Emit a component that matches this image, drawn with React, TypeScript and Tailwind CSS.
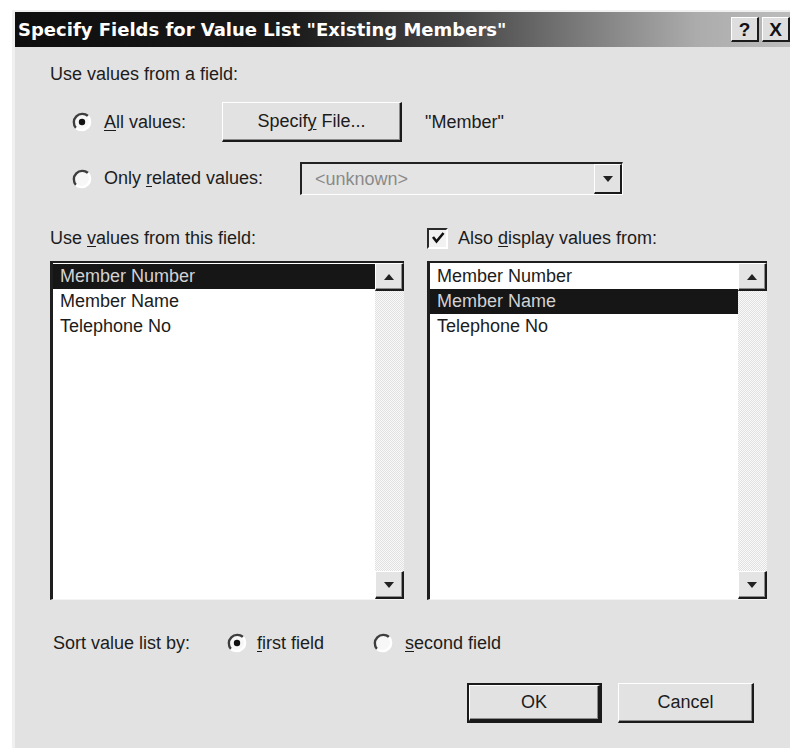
import React from "react";

const ink = "text-[#1c1c1c]";

function Radio({ checked }: { checked?: boolean }) {
  return (
    <svg width="20" height="20" viewBox="0 0 20 20" className="shrink-0">
      <circle cx="10" cy="10" r="8" fill="#f7f7f7" />
      <path d="M16 4 A8.5 8.5 0 0 0 4 16" stroke="#3e3e3e" strokeWidth="2.4" fill="none" />
      <path d="M4 16 A8.5 8.5 0 0 0 16 4" stroke="#ffffff" strokeWidth="2.4" fill="none" />
      {checked && <circle cx="10" cy="10" r="3.2" fill="#111" />}
    </svg>
  );
}

function CheckBox() {
  return (
    <div className="w-[21px] h-[21px] shrink-0 border-2 border-t-[#2a2a2a] border-l-[#2a2a2a] border-r-white border-b-white bg-[#f2f2f2] flex items-center justify-center">
      <svg width="14" height="14" viewBox="0 0 14 14">
        <path d="M2 6 L5.5 10.5 L12.5 2" stroke="#111" strokeWidth="2.6" fill="none" />
      </svg>
    </div>
  );
}

function Arrow({ dir }: { dir: "up" | "down" }) {
  return (
    <svg width="10" height="6" viewBox="0 0 10 6">
      {dir === "up" ? <path d="M5 0 L10 6 H0 Z" fill="#222" /> : <path d="M0 0 H10 L5 6 Z" fill="#222" />}
    </svg>
  );
}

function ScrollBtn({ dir }: { dir: "up" | "down" }) {
  return (
    <div className="w-[29px] h-[28px] shrink-0 bg-[#e4e4e4] border-t border-l border-t-white border-l-white border-r-2 border-b-2 border-r-[#1a1a1a] border-b-[#1a1a1a] shadow-[inset_-1px_-1px_0_#8c8c8c] flex items-center justify-center">
      <Arrow dir={dir} />
    </div>
  );
}

function ListBox({ items, selected, width }: { items: string[]; selected: number; width: string }) {
  return (
    <div className={`${width} h-[339px] flex border-t-2 border-l-[3px] border-t-[#1e1e1e] border-l-[#1e1e1e] border-b border-b-[#f4f4f4] bg-white`}>
      <div className="flex-1 pt-[1px]">
        {items.map((t, i) => (
          <div
            key={t}
            className={`h-[25px] pl-[7px] flex items-center text-[18px] leading-[25px] ${
              i === selected ? "bg-[#161616] text-[#d2d2d2]" : ink
            }`}
          >
            {t}
          </div>
        ))}
      </div>
      {/* scroll bar with dithered track */}
      <div className="w-[29px] flex flex-col bg-[repeating-conic-gradient(#fafafa_0_25%,#e0e0e0_0_50%)] bg-[length:2px_2px]">
        <ScrollBtn dir="up" />
        <div className="flex-1" />
        <ScrollBtn dir="down" />
      </div>
    </div>
  );
}

function PushButton({ children, isDefault, width }: { children: React.ReactNode; isDefault?: boolean; width: string }) {
  const face = (
    <div className="h-full w-full flex items-center justify-center bg-[#e2e2e2] border-t border-l border-t-white border-l-white border-r-2 border-b-2 border-r-[#1a1a1a] border-b-[#1a1a1a] shadow-[inset_-1px_-1px_0_#8c8c8c]">
      {children}
    </div>
  );
  return isDefault ? (
    <div className={`${width} h-[40px] border-2 border-[#1a1a1a]`}>{face}</div>
  ) : (
    <div className={`${width} h-[40px]`}>{face}</div>
  );
}

function TitleButton({ children }: { children: React.ReactNode }) {
  return (
    <div className="w-[28px] h-[25px] bg-[#dedede] border-t border-l border-t-white border-l-white border-r-2 border-b-2 border-r-[#1a1a1a] border-b-[#1a1a1a] flex items-center justify-center text-[19px] font-bold text-[#111] leading-none">
      {children}
    </div>
  );
}

export default function App() {
  return (
    <div className="w-[790px] h-[748px] bg-white pt-[10px] pl-[12px] overflow-hidden flex font-['Liberation_Sans',Arial,sans-serif]">
      <div className="flex-1 flex flex-col bg-[#e2e2e2] border-t-2 border-l-[3px] border-t-[#f0f0f0] border-l-[#f0f0f0]">
        {/* caption bar */}
        <div className="h-[35px] shrink-0 flex items-center pl-[3px] bg-[linear-gradient(to_right,#0e0e0e_0%,#1a1a1a_35%,#444444_57%,#7e7e7e_74%,#acacac_88%,#bcbcbc_100%)]">
          <div className="flex-1 text-white font-bold text-[18px] leading-none whitespace-nowrap font-['DejaVu_Sans',Verdana,sans-serif]">
            Specify Fields for Value List "Existing Members"
          </div>
          <div className="flex gap-[3px] items-center">
            <TitleButton>?</TitleButton>
            <TitleButton>X</TitleButton>
          </div>
        </div>

        {/* dialog body */}
        <div className={`flex flex-col pl-[35px] text-[18px] ${ink}`}>
          <div className="mt-[16px] h-[22px] leading-[22px]">Use values from a field:</div>

          <div className="mt-[17px] h-[40px] flex items-center pl-[22px]">
            <Radio checked />
            <div className="ml-[12px] w-[118px]">
              <span className="underline underline-offset-2">A</span>ll values:
            </div>
            <PushButton width="w-[180px]">
              <span>
                Specif<span className="underline underline-offset-2">y</span> File...
              </span>
            </PushButton>
            <div className="ml-[23px]">"Member"</div>
          </div>

          <div className="mt-[20px] h-[33px] flex items-center pl-[22px]">
            <Radio />
            <div className="ml-[12px] w-[196px]">
              Only <span className="underline underline-offset-2">r</span>elated values:
            </div>
            <div className="w-[323px] h-[33px] flex border-t-2 border-l-2 border-t-[#222] border-l-[#222] border-b border-r border-b-white border-r-white bg-[#e4e4e4]">
              <div className="flex-1 pl-[13px] flex items-center text-[#8a8a8a]">&lt;unknown&gt;</div>
              <div className="w-[28px] bg-[#e2e2e2] border-t border-l border-t-white border-l-white border-r-2 border-b-2 border-r-[#1a1a1a] border-b-[#1a1a1a] flex items-center justify-center">
                <Arrow dir="down" />
              </div>
            </div>
          </div>

          <div className="mt-[31px] grid grid-cols-[354px_340px] gap-x-[23px]">
            <div className="h-[24px] leading-[24px]">
              Use <span className="underline underline-offset-2">v</span>alues from this field:
            </div>
            <div className="h-[24px] flex items-center">
              <CheckBox />
              <div className="ml-[10px] leading-[24px]">
                Also <span className="underline underline-offset-2">d</span>isplay values from:
              </div>
            </div>
            <div className="mt-[11px]">
              <ListBox width="w-[354px]" items={["Member Number", "Member Name", "Telephone No"]} selected={0} />
            </div>
            <div className="mt-[11px]">
              <ListBox width="w-[340px]" items={["Member Number", "Member Name", "Telephone No"]} selected={1} />
            </div>
          </div>

          <div className="mt-[33px] h-[20px] flex items-center pl-[3px] leading-[20px]">
            <div className="w-[174px]">Sort value list by:</div>
            <Radio checked />
            <div className="ml-[10px] w-[116px]">
              <span className="underline underline-offset-2">f</span>irst field
            </div>
            <Radio />
            <div className="ml-[12px]">
              <span className="underline underline-offset-2">s</span>econd field
            </div>
          </div>

          <div className="mt-[30px] flex justify-end gap-[16px] pr-[36px]">
            <PushButton isDefault width="w-[135px]">OK</PushButton>
            <PushButton width="w-[136px]">Cancel</PushButton>
          </div>
        </div>
      </div>
    </div>
  );
}
